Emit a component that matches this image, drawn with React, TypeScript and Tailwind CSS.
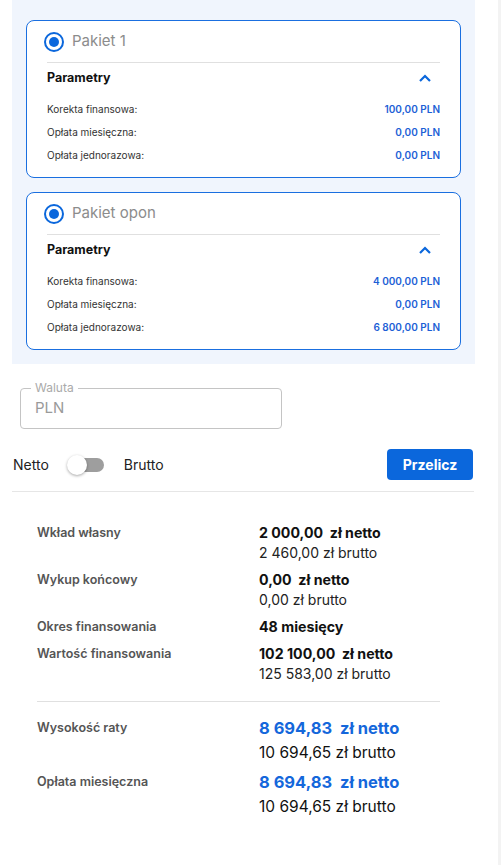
import React from "react";

type Row = { label: string; value: string };

const packages: { name: string; rows: Row[] }[] = [
  {
    name: "Pakiet 1",
    rows: [
      { label: "Korekta finansowa:", value: "100,00 PLN" },
      { label: "Opłata miesięczna:", value: "0,00 PLN" },
      { label: "Opłata jednorazowa:", value: "0,00 PLN" },
    ],
  },
  {
    name: "Pakiet opon",
    rows: [
      { label: "Korekta finansowa:", value: "4 000,00 PLN" },
      { label: "Opłata miesięczna:", value: "0,00 PLN" },
      { label: "Opłata jednorazowa:", value: "6 800,00 PLN" },
    ],
  },
];

function PackageCard({ name, rows }: { name: string; rows: Row[] }) {
  return (
    <div className="rounded-lg border border-[#1a6fe0] bg-white px-5 pb-[10px]">
      <div className="flex h-[41px] items-center gap-2">
        <span className="-ml-[3px] flex h-5 w-5 items-center justify-center rounded-full border-2 border-[#0b67dc]">
          <span className="h-[10px] w-[10px] rounded-full bg-[#0b67dc]" />
        </span>
        <span className="text-[15px] text-[#8c8c8c]">{name}</span>
      </div>
      <div className="border-t border-[#e0e0e0]" />
      <div className="flex h-[30px] items-center justify-between">
        <span className="text-[12.5px] font-bold text-[#111]">Parametry</span>
        <svg width="12" height="8" viewBox="0 0 12 8" className="mr-[9px]">
          <path d="M1 7 L6 2 L11 7" fill="none" stroke="#0b67dc" strokeWidth="2.2" />
        </svg>
      </div>
      <div className="mt-[5px]">
        {rows.map((r) => (
          <div key={r.label} className="flex h-[23px] items-center justify-between text-[10px]">
            <span className="text-[#333]">{r.label}</span>
            <span className="font-semibold text-[#1d5fd6]">{r.value}</span>
          </div>
        ))}
      </div>
    </div>
  );
}

function Result({
  label,
  main,
  sub,
  blue,
}: {
  label: string;
  main: string;
  sub?: string;
  blue?: boolean;
}) {
  return (
    <div className="flex">
      <div className={`w-[222px] shrink-0 text-[12.5px] font-semibold text-[#555] ${blue ? "leading-[24px]" : "leading-[20px]"}`}>
        {label}
      </div>
      <div>
        <div
          className={
            blue
              ? "whitespace-pre text-[16.5px] font-bold leading-[24px] text-[#1467db]"
              : "whitespace-pre text-[14.2px] font-bold leading-[20px] text-[#111]"
          }
        >
          {main}
        </div>
        {sub && (
          <div
            className={
              blue
                ? "text-[15.5px] leading-[25px] text-[#111]"
                : "text-[14px] leading-[20px] text-[#222]"
            }
          >
            {sub}
          </div>
        )}
      </div>
    </div>
  );
}

export default function App() {
  return (
    <div className="flex min-h-[865px] bg-white" style={{ fontFamily: "Inter, 'Noto Sans', sans-serif" }}>
      <div className="w-[498px] px-3">
        {/* packages */}
        <div className="flex w-[463px] flex-col gap-[14px] bg-[#f0f5fd] px-[14px] pt-5 pb-[14px]">
          {packages.map((p) => (
            <PackageCard key={p.name} name={p.name} rows={p.rows} />
          ))}
        </div>

        {/* currency */}
        <div className="relative ml-2 mt-[24px] h-[41px] w-[262px] rounded border border-[#c4c4c4]">
          <span className="absolute -top-[9px] left-[10px] bg-white px-1 text-[12px] leading-[16px] text-[#aaa]">
            Waluta
          </span>
          <div className="flex h-full items-center pl-[14px] text-[15px] text-[#9a9a9a]">PLN</div>
        </div>

        {/* toggle */}
        <div className="mt-[20px] flex items-center justify-between">
          <div className="flex items-center text-[14px] text-[#222]">
            <span className="ml-px">Netto</span>
            <span className="relative ml-[18px] flex h-5 w-[37px] items-center">
              <span className="ml-[7px] h-[14px] w-[30px] rounded-full bg-[#9e9e9e]" />
              <span className="absolute left-0 top-0 h-5 w-5 rounded-full bg-white shadow-[0_1px_3px_rgba(0,0,0,0.35)]" />
            </span>
            <span className="ml-5">Brutto</span>
          </div>
          <button className="mr-[13px] h-[31px] w-[86px] rounded bg-[#0b67dc] text-[14px] font-bold text-white">
            Przelicz
          </button>
        </div>
        <div className="mt-[11px] w-[462px] border-t border-[#e6e6e6]" />

        {/* results */}
        <div className="pl-[25px] pt-[31px]">
          <div className="flex flex-col gap-[7px]">
            <Result label="Wkład własny" main={"2 000,00  zł netto"} sub="2 460,00 zł brutto" />
            <Result label="Wykup końcowy" main={"0,00  zł netto"} sub="0,00 zł brutto" />
            <Result label="Okres finansowania" main="48 miesięcy" />
            <Result label="Wartość finansowania" main={"102 100,00  zł netto"} sub="125 583,00 zł brutto" />
          </div>
          <div className="mt-[17px] w-[403px] border-t border-[#e0e0e0]" />
          <div className="mt-[14px] flex flex-col gap-[5px]">
            <Result blue label="Wysokość raty" main={"8 694,83  zł netto"} sub="10 694,65 zł brutto" />
            <Result blue label="Opłata miesięczna" main={"8 694,83  zł netto"} sub="10 694,65 zł brutto" />
          </div>
        </div>
      </div>
      <div className="flex-1 bg-[#f3f3f3]" />
    </div>
  );
}
